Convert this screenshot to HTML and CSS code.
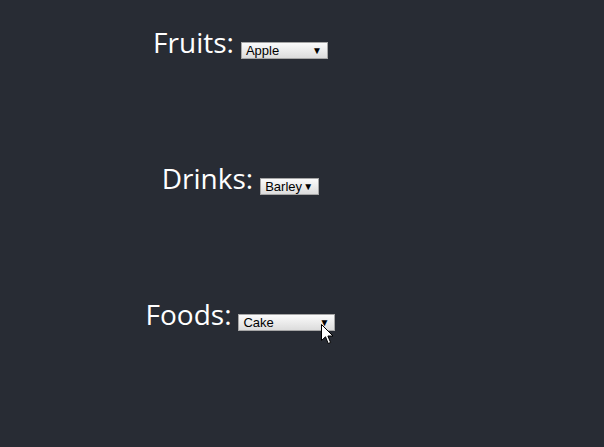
FILE: index.html
```html
<!DOCTYPE html>
<html>
<head>
<meta charset="utf-8">
<link rel="stylesheet" href="styles.css">
</head>
<body>
<div class="app">
  <div class="row">
    <span class="label">Fruits:</span>
    <span class="select fruits"><span class="value">Apple</span><span class="arrow">▼</span></span>
  </div>
  <div class="row">
    <span class="label">Drinks:</span>
    <span class="select drinks"><span class="value">Barley</span><span class="arrow">▼</span></span>
  </div>
  <div class="row">
    <span class="label">Foods:</span>
    <span class="select foods"><span class="value">Cake</span><span class="arrow">▼</span>
      <svg class="cursor" width="13" height="21" viewBox="0 0 13 21"><path d="M0.5 0.5 L0.5 16.5 L4.5 12.8 L7.2 19.5 L9.6 18.5 L6.9 12 L12 12 Z" fill="#fff" stroke="#000" stroke-width="1" stroke-linejoin="round"/></svg>
    </span>
  </div>
</div>
</body>
</html>
```

FILE: styles.css
```css
html, body {
  margin: 0;
  padding: 0;
  background: #282c34;
}
body {
  width: 604px;
  height: 447px;
}
.app {
  width: 481px;
  display: flex;
  flex-direction: column;
  align-items: center;
  padding-top: 24px;
  gap: 100px;
}
.row {
  display: flex;
  align-items: flex-end;
  height: 36px;
  gap: 7px;
}
.label {
  font-family: "Open Sans", sans-serif;
  font-size: 28px;
  line-height: 35px;
  color: #ffffff;
}
.select {
  position: relative;
  display: flex;
  align-items: center;
  justify-content: space-between;
  box-sizing: border-box;
  height: 17px;
  margin-bottom: 1px;
  padding: 0 5px 0 4px;
  border: 1px solid #a6a6a6;
  background: linear-gradient(#fbfbfb, #dcdcdc);
  font-family: "Liberation Sans", Arial, sans-serif;
  font-size: 13px;
  color: #000;
}
.fruits { width: 87px; }
.drinks { width: 59px; }
.foods { width: 97px; }
.arrow {
  font-size: 10px;
  line-height: 1;
}
.cursor {
  position: absolute;
  left: 82px;
  top: 9px;
}
```
